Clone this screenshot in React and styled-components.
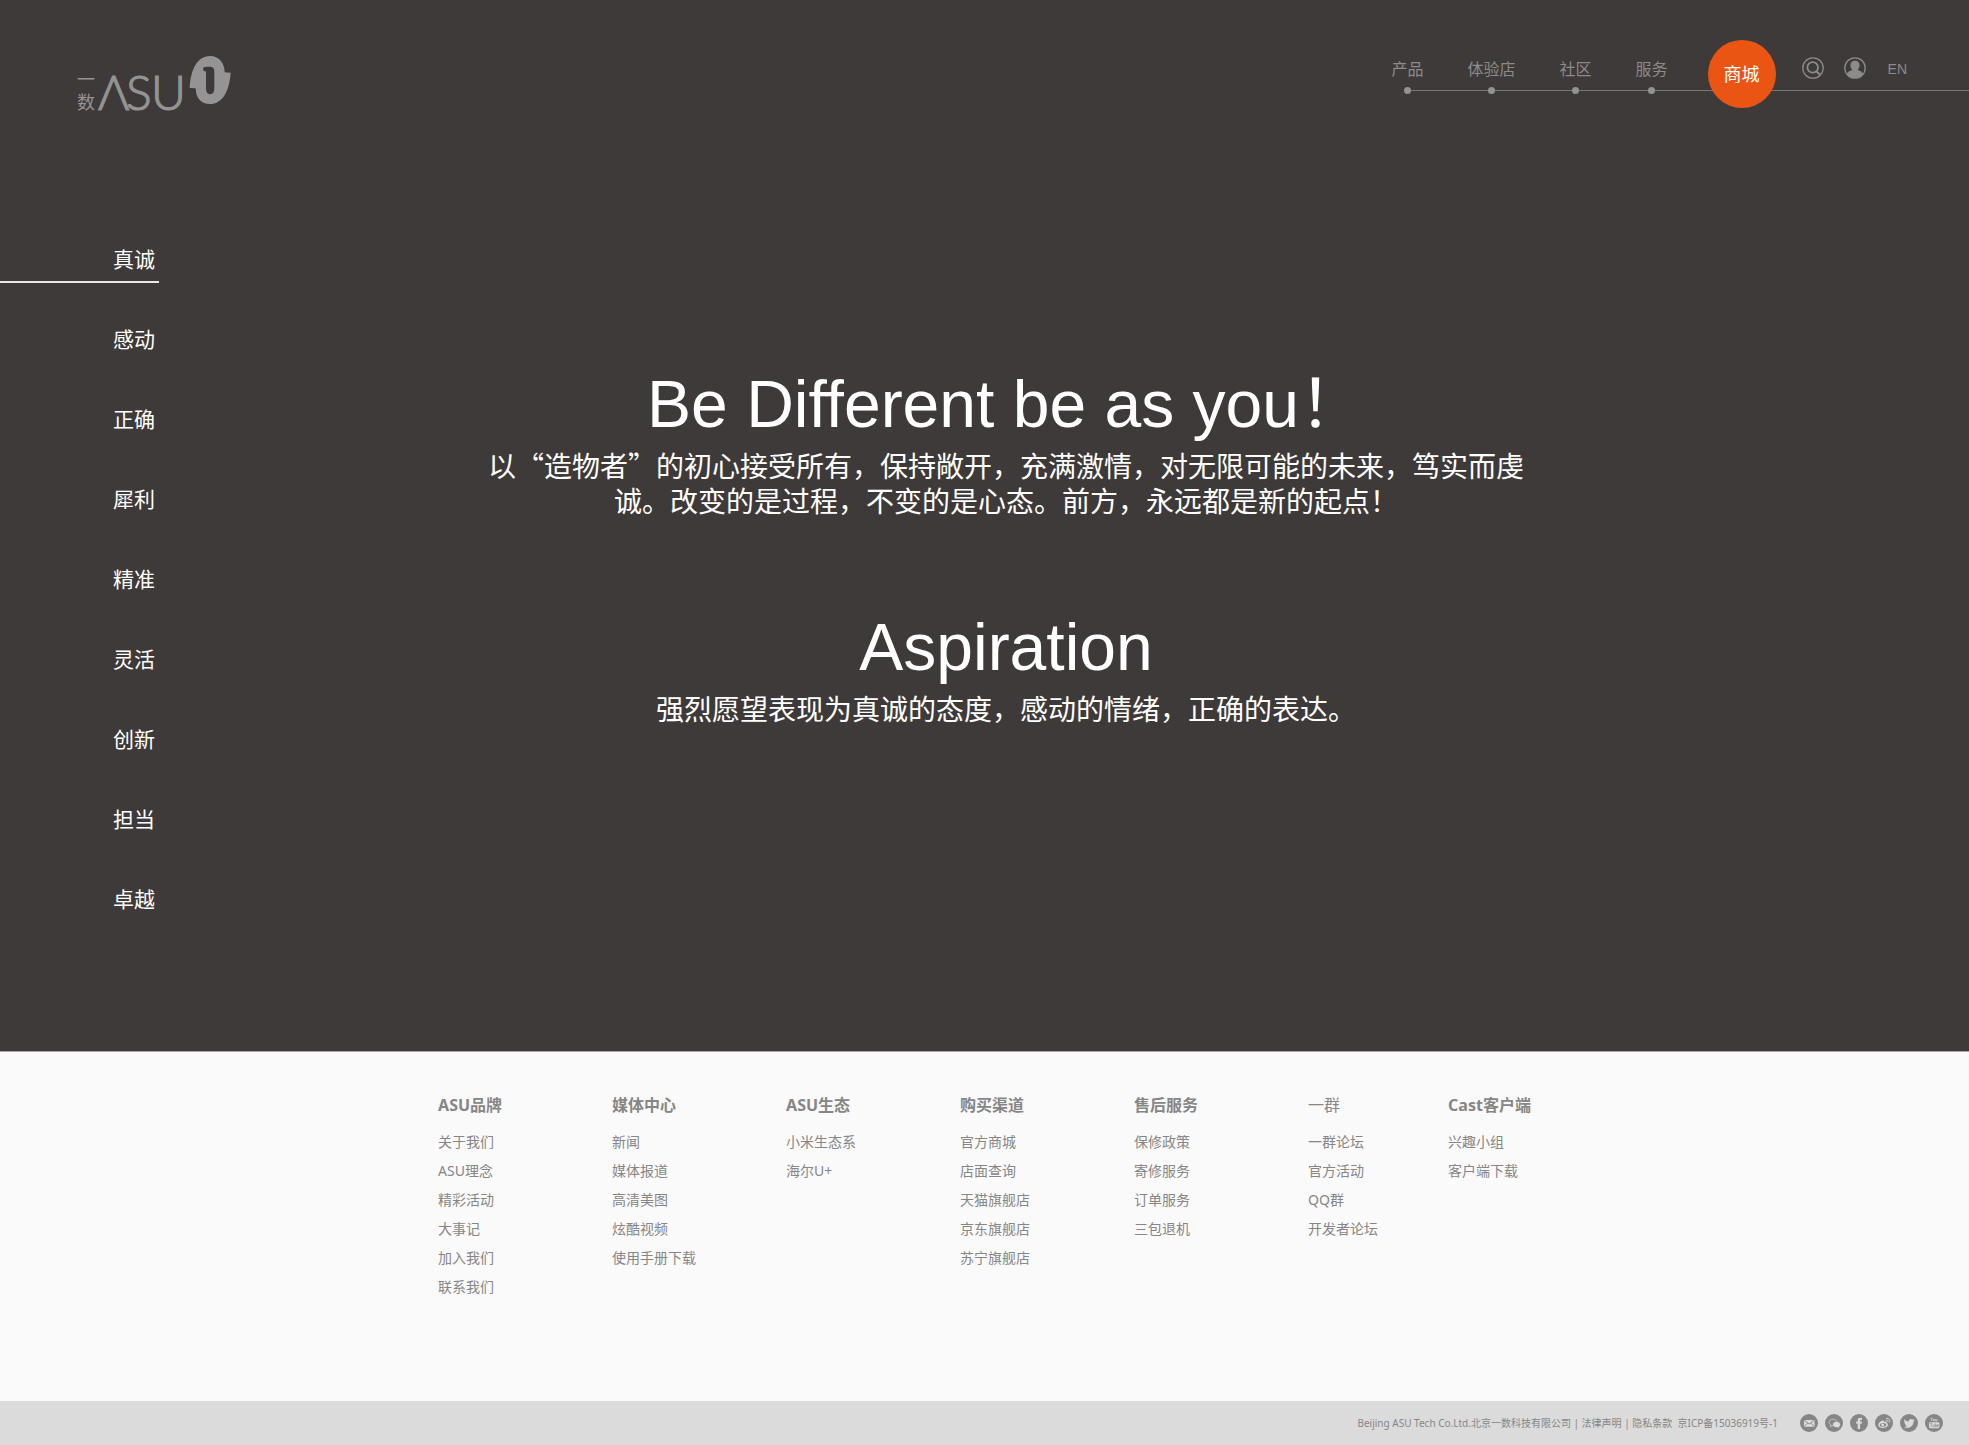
import React from "react";
import styled, { createGlobalStyle } from "styled-components";

const GlobalStyle = createGlobalStyle`
  *, *::before, *::after { box-sizing: border-box; }
  body {
    margin: 0;
    background: #fafafa;
    font-family: "Noto Sans", "Noto Sans CJK SC", sans-serif;
  }
  a { color: inherit; text-decoration: none; }
  ul { margin: 0; padding: 0; list-style: none; }
  button { padding: 0; border: 0; background: none; color: inherit; font: inherit; cursor: pointer; }
`;

const Page = styled.div`
  min-height: 100vh;
  display: flex;
  flex-direction: column;
`;

const Hero = styled.div`
  background: #3e3a39;
  color: #fff;
  border-bottom: 1px solid #a5a3a3;
`;

const Header = styled.header`
  display: flex;
  justify-content: space-between;
  align-items: flex-start;
  height: 220px;
  padding-left: 72px;
`;

const LogoLink = styled.a`
  display: block;
  margin-top: 54px;
  color: #939493;
`;

const TopBar = styled.div`
  position: relative;
  display: flex;
  align-items: flex-start;
  margin-top: 40px;
  padding-right: 62px;
  color: #8c8a8a;

  &::before {
    content: "";
    position: absolute;
    top: 50px;
    left: 16px;
    right: 0;
    height: 1px;
    background: #787574;
  }
`;

const NavList = styled.ul`
  display: flex;
  gap: 44px;
  margin-right: 40px;
`;

const NavLink = styled.a`
  position: relative;
  display: flex;
  flex-direction: column;
  align-items: center;
  padding-top: 17px;
  font-size: 16px;
  line-height: 24px;

  &::after {
    content: "";
    width: 7px;
    height: 7px;
    margin-top: 6px;
    border-radius: 50%;
    background: #939292;
  }
`;

const ShopLink = styled.a`
  position: relative;
  display: flex;
  align-items: center;
  justify-content: center;
  width: 68px;
  height: 68px;
  margin-right: 26px;
  border-radius: 50%;
  background: #ea5514;
  color: #fff;
  font-size: 18px;
  line-height: 24px;
`;

const Tools = styled.div`
  display: flex;
  align-items: center;
  gap: 20px;
  height: 22px;
  margin-top: 17px;
`;

const IconButton = styled.button`
  display: block;
  width: 22px;
  height: 22px;
`;

const LangButton = styled.button`
  margin: 2px 0 0 2px;
  font-family: "Liberation Sans", sans-serif;
  font-size: 14px;
  line-height: 24px;
`;

const Body = styled.div`
  display: flex;
  align-items: flex-start;
  padding-bottom: 111px;
`;

const SideNav = styled.nav`
  width: 159px;
  flex: none;
`;

const SideItem = styled.li`
  height: 80px;
  padding-top: 23px;
`;

const SideLink = styled.a`
  display: block;
  height: 40px;
  padding-left: 113px;
  border-bottom: 2px solid ${(p) => (p.$active ? "#e8e9e9" : "transparent")};
  font-size: 21px;
  line-height: 32px;
`;

const Statement = styled.main`
  flex: 1;
  display: flex;
  flex-direction: column;
  align-items: center;
  gap: 91px;
  padding: 146px 116px 0 0;
  text-align: center;
`;

const Block = styled.section`
  max-width: 1040px;
`;

const Title = styled.h2`
  margin: 0 0 6px;
  font-family: "Liberation Sans", "Noto Sans CJK SC", sans-serif;
  font-size: 66px;
  font-weight: 400;
  line-height: 76px;
`;

const Copy = styled.p`
  margin: 0;
  font-family: "Noto Sans CJK SC", sans-serif;
  font-size: 28px;
  line-height: 35px;
`;

const Footer = styled.footer`
  flex: 1;
  display: flex;
  flex-direction: column;
  justify-content: space-between;
  color: #868686;
`;

const Columns = styled.div`
  display: grid;
  grid-template-columns: repeat(5, 174px) 140px auto;
  justify-content: center;
  padding: 41px 0 60px;
`;

const ColumnTitle = styled.h3`
  margin: 0 0 10px;
  font-size: 16px;
  font-weight: ${(p) => (p.$light ? 400 : 700)};
  line-height: 24px;
`;

const ColumnItem = styled.li`
  font-size: 14px;
  line-height: 29px;
`;

const Legal = styled.div`
  display: flex;
  align-items: center;
  justify-content: flex-end;
  gap: 22px;
  height: 44px;
  padding-right: 26px;
  background: #dbdbdb;
`;

const LegalText = styled.p`
  margin: 0;
  font-size: 10px;
  line-height: 16px;
  white-space: pre;
`;

const Social = styled.ul`
  display: flex;
  gap: 7px;
`;

const SocialLink = styled.a`
  display: block;
  height: 18px;
`;

const nav = ["产品", "体验店", "社区", "服务"];
const values = ["真诚", "感动", "正确", "犀利", "精准", "灵活", "创新", "担当", "卓越"];
const columns = [
  { title: "ASU品牌", links: ["关于我们", "ASU理念", "精彩活动", "大事记", "加入我们", "联系我们"] },
  { title: "媒体中心", links: ["新闻", "媒体报道", "高清美图", "炫酷视频", "使用手册下载"] },
  { title: "ASU生态", links: ["小米生态系", "海尔U+"] },
  { title: "购买渠道", links: ["官方商城", "店面查询", "天猫旗舰店", "京东旗舰店", "苏宁旗舰店"] },
  { title: "售后服务", links: ["保修政策", "寄修服务", "订单服务", "三包退机"] },
  { title: "一群", light: true, links: ["一群论坛", "官方活动", "QQ群", "开发者论坛"] },
  { title: "Cast客户端", links: ["兴趣小组", "客户端下载"] },
];

const Logo = () => (
  <svg width="164" height="76" viewBox="-4 0 164 76" overflow="visible" fill="currentColor" aria-hidden="true">
    <g fontFamily='"Noto Sans CJK SC", sans-serif' fontSize="18">
      <text x="1" y="32">一</text>
      <text x="1" y="55">数</text>
    </g>
    <text x="22 50 75" y="56" fontFamily="Lato, sans-serif" fontWeight="300" fontSize="48" stroke="currentColor" strokeWidth="1.2">ΛSU</text>
    <path
      fillRule="evenodd"
      d="M113.7 34C114.5 16 121 2 134 2C144 2 148.500 10 148.700 18.300L154.700 18.700C153.500 36 147 50 134 50C124 50 119.800 43 119.700 34.300ZM127.300 13.700C128 12.700 130 12.700 133 12.700C137 12.700 138.300 14 138.300 18V35C138.300 42 130 42 130 35V18.500C130 17.200 129 17 127.300 16.700Z"
    />
  </svg>
);

const SearchIcon = () => (
  <svg width="22" height="22" viewBox="0 0 22 22" fill="none" stroke="currentColor" aria-hidden="true">
    <circle cx="11" cy="11" r="10.200" strokeWidth="1.300" />
    <circle cx="10.700" cy="10.400" r="5.300" strokeWidth="1.800" />
    <path d="M14.500 14.500L18 17.600" strokeWidth="2" />
  </svg>
);

const UserIcon = () => (
  <svg width="22" height="22" viewBox="0 0 22 22" aria-hidden="true">
    <circle cx="11" cy="11" r="10.200" fill="none" stroke="currentColor" strokeWidth="1.300" />
    <path
      fill="currentColor"
      d="M11 3.800C14 3.800 15.600 5.900 15.600 8.300C15.600 10.300 14.800 11.600 13.800 12.500C14 13.600 18.600 14 19 17.200A10.300 10.300 0 0 1 3 17.200C3.400 14 8 13.600 8.200 12.500C7.200 11.600 6.400 10.300 6.400 8.300C6.400 5.900 8 3.800 11 3.800Z"
    />
  </svg>
);

const Disc = ({ children }) => (
  <svg width="18" height="18" viewBox="0 0 18 18" aria-hidden="true">
    <circle cx="9" cy="9" r="9" fill="#868686" />
    {children}
  </svg>
);

const social = [
  {
    name: "邮箱",
    art: (
      <g fill="#dbdbdb">
        <rect x="4" y="6" width="10.500" height="6.800" rx="0.600" />
        <path d="M4 6L9.200 10L14.400 6M4.200 12.600L7.500 9M14.200 12.600L11 9" fill="none" stroke="#868686" strokeWidth="0.900" />
      </g>
    ),
  },
  {
    name: "微信",
    art: (
      <g>
        <path d="M8 11.500L5.500 12.500L5.800 10.800C2.800 9 4.300 5.200 7.800 5.200C10 5.200 11.600 6.400 11.800 8" fill="none" stroke="#dbdbdb" strokeWidth="0.700" />
        <path fill="#dbdbdb" d="M11.500 7.700C13.700 7.700 15.200 9 15.200 10.500C15.200 11.300 14.800 12 14.100 12.600L14.300 13.800L12.900 13.200C10 13.800 7.900 12.300 7.900 10.500C7.900 9 9.400 7.700 11.500 7.700Z" />
      </g>
    ),
  },
  {
    name: "Facebook",
    art: <path fill="#dbdbdb" d="M7.700 15V9.700H6.200V7.500H7.700V6.300C7.700 4.300 8.800 3.600 12 3.900V5.900C10.600 5.800 10.100 5.900 10.100 6.700V7.500H12L11.700 9.700H10.100V15Z" />,
  },
  {
    name: "微博",
    art: (
      <g>
        <path fill="#dbdbdb" fillRule="evenodd" d="M7.500 6.600C8.600 6.200 9.100 6.800 8.800 7.900C11 7.100 12 7.700 11.700 9C14.300 10 12.700 14 8.200 14C5.200 14 3.300 12.700 3.300 11C3.300 9.200 5.500 7.200 7.500 6.600ZM8 8.900C6 8.900 4.800 10 4.800 11.200C4.800 12.300 6 13.100 7.900 13.100C9.900 13.100 11.300 12 11.300 10.800C11.300 9.600 10 8.900 8 8.900Z" />
        <circle cx="7.700" cy="11" r="1.500" fill="#dbdbdb" />
        <path d="M11.300 4.400C13.800 3.900 15.400 5.800 14.700 8M11.500 6.200C12.700 6 13.200 6.700 13 7.700" fill="none" stroke="#dbdbdb" strokeWidth="0.900" strokeLinecap="round" />
      </g>
    ),
  },
  {
    name: "Twitter",
    art: <path fill="#dbdbdb" d="M4.300 5.200C5.500 6.600 7 7.400 8.900 7.500C8.500 5.400 10.900 4 12.600 5.600C13.200 5.500 13.800 5.200 14.300 4.900C14.100 5.600 13.700 6.100 13.200 6.400C13.800 6.300 14.300 6.200 14.800 6C14.400 6.600 14 7 13.500 7.400C13.600 12.300 8.500 15.300 4 12.900C5.400 12.900 6.300 12.600 7.200 12C6.100 11.800 5.400 11.200 5.200 10.400H6.100C4.900 10 4.300 9.100 4.300 8.100L5.200 8.400C4.100 7.500 3.800 6.400 4.300 5.200Z" />,
  },
  {
    name: "YouTube",
    art: (
      <g fill="none" stroke="#dbdbdb" strokeWidth="0.800">
        <path d="M5.800 3.800L6.600 5.300L7.400 3.800M6.600 5.300V7" />
        <ellipse cx="8.900" cy="6" rx="0.700" ry="0.900" />
        <path d="M10.700 5V6.900H12V5" />
        <rect x="4" y="8.200" width="10.400" height="6" rx="1.400" fill="#dbdbdb" stroke="none" />
        <path d="M5.200 9.500H7.200M6.200 9.500V13M8 10.500V12.800H9.100V10.500M10.300 9.300V12.800H11.300V10.800H10.300M13.500 12.700H12.400V10.700H13.400V11.700H12.400" stroke="#868686" strokeWidth="0.600" />
      </g>
    ),
  },
];

export default function App() {
  return (
    <Page lang="zh-CN">
      <GlobalStyle />
      <Hero>
        <Header>
          <LogoLink href="#home" aria-label="一数 ASU">
            <Logo />
          </LogoLink>
          <TopBar>
            <nav>
              <NavList>
                {nav.map((n) => (
                  <li key={n}>
                    <NavLink href="#nav">{n}</NavLink>
                  </li>
                ))}
              </NavList>
            </nav>
            <ShopLink href="#shop">商城</ShopLink>
            <Tools>
              <IconButton type="button" aria-label="搜索">
                <SearchIcon />
              </IconButton>
              <IconButton type="button" aria-label="账户">
                <UserIcon />
              </IconButton>
              <LangButton type="button">EN</LangButton>
            </Tools>
          </TopBar>
        </Header>
        <Body>
          <SideNav>
            <ul>
              {values.map((v, i) => (
                <SideItem key={v}>
                  <SideLink href="#value" $active={i === 0}>
                    {v}
                  </SideLink>
                </SideItem>
              ))}
            </ul>
          </SideNav>
          <Statement>
            <Block>
              <Title>Be Different be as you！</Title>
              <Copy>
                以“造物者”的初心接受所有，保持敞开，充满激情，对无限可能的未来，笃实而虔诚。改变的是过程，不变的是心态。前方，永远都是新的起点！
              </Copy>
            </Block>
            <Block>
              <Title>Aspiration</Title>
              <Copy>强烈愿望表现为真诚的态度，感动的情绪，正确的表达。</Copy>
            </Block>
          </Statement>
        </Body>
      </Hero>
      <Footer>
        <Columns>
          {columns.map((c) => (
            <section key={c.title}>
              <ColumnTitle $light={c.light}>{c.title}</ColumnTitle>
              <ul>
                {c.links.map((l) => (
                  <ColumnItem key={l}>
                    <a href="#link">{l}</a>
                  </ColumnItem>
                ))}
              </ul>
            </section>
          ))}
        </Columns>
        <Legal>
          <LegalText>
            Beijing ASU Tech Co.Ltd.北京一数科技有限公司 | <a href="#law">法律声明</a> | <a href="#privacy">隐私条款</a>
            {"  京ICP备15036919号-1"}
          </LegalText>
          <Social>
            {social.map((s) => (
              <li key={s.name}>
                <SocialLink href="#social" aria-label={s.name}>
                  <Disc>{s.art}</Disc>
                </SocialLink>
              </li>
            ))}
          </Social>
        </Legal>
      </Footer>
    </Page>
  );
}
